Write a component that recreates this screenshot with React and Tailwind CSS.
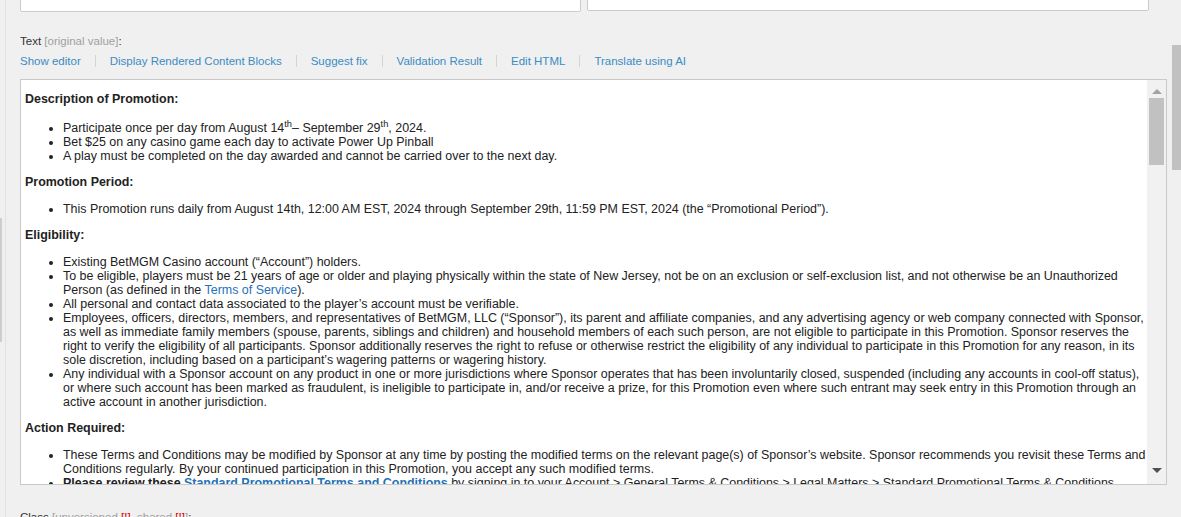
import { Fragment } from 'react'

const toolbarLinks = [
  'Show editor',
  'Display Rendered Content Blocks',
  'Suggest fix',
  'Validation Result',
  'Edit HTML',
  'Translate using AI',
]

function Heading({ children }) {
  return <p className="mt-[12px] mb-[13px] font-bold leading-[14px] text-[#222]">{children}</p>
}

function Bullets({ children }) {
  return <ul className="my-[12px] list-disc pl-[38px] leading-[14px] text-[#222]">{children}</ul>
}

function Link({ children, bold }) {
  return <a className={`text-[#1f72b8] ${bold ? 'font-bold' : ''}`}>{children}</a>
}

function FakeScrollbar() {
  return (
    <div className="flex w-[19px] shrink-0 flex-col items-center bg-[#f1f1f1]">
      <div className="flex h-[18px] w-full items-center justify-center pt-[4px]">
        <div className="h-0 w-0 border-x-[5px] border-b-[5px] border-x-transparent border-b-[#a3a3a3]" />
      </div>
      <div className="h-[67px] w-[15px] bg-[#c1c1c1]" />
      <div className="flex-1" />
      <div className="flex h-[22px] w-full items-center justify-center pb-[6px]">
        <div className="h-0 w-0 border-x-[5px] border-t-[5px] border-x-transparent border-t-[#505050]" />
      </div>
    </div>
  )
}

function PromoContent() {
  return (
    <div className="flex-1 overflow-hidden pl-[4px] text-[12.45px]">
      <Heading>Description of Promotion:</Heading>
      <Bullets>
        {/* the superscripts make the first line box a little taller */}
        <li className="pt-[2px]">
          Participate once per day from August 14<sup>th</sup>– September 29<sup>th</sup>, 2024.
        </li>
        <li>Bet $25 on any casino game each day to activate Power Up Pinball</li>
        <li>A play must be completed on the day awarded and cannot be carried over to the next day.</li>
      </Bullets>
      <Heading>Promotion Period:</Heading>
      <Bullets>
        <li>
          This Promotion runs daily from August 14th, 12:00 AM EST, 2024 through September 29th, 11:59 PM EST,
          2024 (the “Promotional Period”).
        </li>
      </Bullets>
      <Heading>Eligibility:</Heading>
      <Bullets>
        <li>Existing BetMGM Casino account (“Account”) holders.</li>
        <li>
          To be eligible, players must be 21 years of age or older and playing physically within the state of New
          Jersey, not be on an exclusion or self-exclusion list, and not otherwise be an Unauthorized Person (as
          defined in the <Link>Terms of Service</Link>).
        </li>
        <li>All personal and contact data associated to the player’s account must be verifiable.</li>
        <li>
          Employees, officers, directors, members, and representatives of BetMGM, LLC (“Sponsor”), its parent and
          affiliate companies, and any advertising agency or web company connected with Sponsor, as well as
          immediate family members (spouse, parents, siblings and children) and household members of each such
          person, are not eligible to participate in this Promotion. Sponsor reserves the right to verify the
          eligibility of all participants. Sponsor additionally reserves the right to refuse or otherwise restrict
          the eligibility of any individual to participate in this Promotion for any reason, in its sole
          discretion, including based on a participant’s wagering patterns or wagering history.
        </li>
        <li>
          Any individual with a Sponsor account on any product in one or more jurisdictions where Sponsor operates
          that has been involuntarily closed, suspended (including any accounts in cool-off status), or where such
          account has been marked as fraudulent, is ineligible to participate in, and/or receive a prize, for this
          Promotion even where such entrant may seek entry in this Promotion through an active account in another
          jurisdiction.
        </li>
      </Bullets>
      <Heading>Action Required:</Heading>
      <Bullets>
        <li>
          These Terms and Conditions may be modified by Sponsor at any time by posting the modified terms on the
          relevant page(s) of Sponsor’s website. Sponsor recommends you revisit these Terms and Conditions
          regularly. By your continued participation in this Promotion, you accept any such modified terms.
        </li>
        <li>
          <span className="font-bold">Please review these </span>
          <Link bold>Standard Promotional Terms and Conditions</Link> by signing in to your Account &gt; General
          Terms &amp; Conditions &gt; Legal Matters &gt; Standard Promotional Terms &amp; Conditions.
        </li>
      </Bullets>
    </div>
  )
}

export default function App() {
  return (
    <div className="flex h-[517px] w-[1181px] overflow-hidden bg-[#f0f0f0] font-['Liberation_Sans',Arial,sans-serif] text-[11.5px] text-[#333]">
      {/* left edge strip */}
      <div className="flex w-[20px] shrink-0">
        <div className="mt-[218px] h-[124px] w-[2px] bg-[#cdcdcd]" />
        <div className="ml-[3px] h-full w-px bg-[#e2e2e2]" />
      </div>

      <div className="flex w-[1147px] shrink-0 flex-col">
        <div className="-mt-[19px] flex gap-[6px]">
          <div className="h-[31px] w-[561px] rounded-[2px] border border-[#cccccc] bg-white" />
          <div className="h-[30px] w-[562px] rounded-[2px] border border-[#cccccc] bg-white" />
        </div>

        <div className="mt-[22px] leading-[14px]">
          Text <span className="text-[#a0a0a0]">[original value]</span>:
        </div>

        <div className="mt-[6px] flex items-center gap-[14px] leading-[14px]">
          {toolbarLinks.map((label, i) => (
            <Fragment key={label}>
              {i > 0 && <span className="h-[12px] w-px bg-[#d4d4d4]" />}
              <a className="text-[#3a8cc4]">{label}</a>
            </Fragment>
          ))}
        </div>

        <div className="mt-[11px] flex h-[406px] border border-[#c9c9c9] bg-white">
          <PromoContent />
          <FakeScrollbar />
        </div>

        <div className="mt-[25px] leading-[14px]">
          Class <span className="text-[#a0a0a0]">[unversioned </span>
          <span className="text-[#d40000]">[!]</span>
          <span className="text-[#a0a0a0]">, shared </span>
          <span className="text-[#d40000]">[!]</span>
          <span className="text-[#a0a0a0]">]</span>:
        </div>
      </div>

      {/* page scrollbar */}
      <div className="flex flex-1 justify-end">
        <div className="mt-[45px] h-[125px] w-[9px] bg-[#c1c1c1]" />
      </div>
    </div>
  )
}
